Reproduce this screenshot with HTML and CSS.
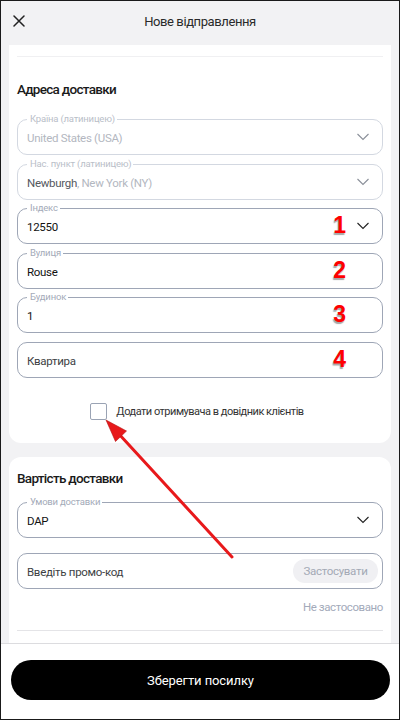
FILE: index.html
```html
<!DOCTYPE html>
<html lang="uk">
<head>
<meta charset="utf-8">
<title>Нове відправлення</title>
<link rel="stylesheet" href="styles.css">
</head>
<body>
<div class="frame">
  <header class="topbar">
    <svg class="close" width="12" height="12" viewBox="0 0 12 12"><path d="M1 1L11 11M11 1L1 11" stroke="#222" stroke-width="1.5" stroke-linecap="round"/></svg>
    <div class="title">Нове відправлення</div>
  </header>
  <main class="content">
    <section class="card card-first">
      <div class="sep sep-top"></div>
      <h2 class="heading">Адреса доставки</h2>
      <div class="fields">
        <div class="field disabled">
          <span class="label">Країна (латиницею)</span>
          <span class="value muted">United States (USA)</span>
          <svg class="chev" width="14" height="8" viewBox="0 0 14 8"><path d="M1.5 1L7 6.5L12.5 1" fill="none" stroke="#8a8f99" stroke-width="1.1"/></svg>
        </div>
        <div class="field disabled">
          <span class="label">Нас. пункт (латиницею)</span>
          <span class="value"><span class="dim">Newburgh</span><span class="muted">, New York (NY)</span></span>
          <svg class="chev" width="14" height="8" viewBox="0 0 14 8"><path d="M1.5 1L7 6.5L12.5 1" fill="none" stroke="#8a8f99" stroke-width="1.1"/></svg>
        </div>
        <div class="field">
          <span class="label">Індекс</span>
          <span class="value">12550</span>
          <span class="num">1</span>
          <svg class="chev" width="14" height="8" viewBox="0 0 14 8"><path d="M1.5 1L7 6.5L12.5 1" fill="none" stroke="#222" stroke-width="1.1"/></svg>
        </div>
        <div class="field">
          <span class="label">Вулиця</span>
          <span class="value">Rouse</span>
          <span class="num">2</span>
        </div>
        <div class="field">
          <span class="label">Будинок</span>
          <span class="value">1</span>
          <span class="num">3</span>
        </div>
        <div class="field">
          <span class="value placeholder">Квартира</span>
          <span class="num">4</span>
        </div>
      </div>
      <label class="check-row">
        <span class="checkbox"></span>
        <span class="check-text">Додати отримувача в довідник клієнтів</span>
      </label>
    </section>
    <section class="card card-second">
      <h2 class="heading heading-2">Вартість доставки</h2>
      <div class="fields fields-2">
        <div class="field">
          <span class="label">Умови доставки</span>
          <span class="value">DAP</span>
          <svg class="chev" width="14" height="8" viewBox="0 0 14 8"><path d="M1.5 1L7 6.5L12.5 1" fill="none" stroke="#222" stroke-width="1.1"/></svg>
        </div>
        <div class="field promo">
          <span class="value placeholder">Введіть промо-код</span>
          <span class="apply">Застосувати</span>
        </div>
      </div>
      <div class="status">Не застосовано</div>
      <div class="sep sep-bottom"></div>
    </section>
  </main>
  <footer class="bottombar">
    <button class="save">Зберегти посилку</button>
  </footer>
  <svg class="arrow" width="400" height="720" viewBox="0 0 400 720">
    <line x1="232" y1="557" x2="118" y2="433" stroke="#e8191b" stroke-width="3" stroke-linecap="round"/>
    <polygon points="106,420 126.5,431 115.5,441.5" fill="#e8191b" stroke="#b31010" stroke-width="0.6" stroke-linejoin="round"/>
  </svg>
</div>
</body>
</html>
```
FILE: styles.css
```css
* { box-sizing: border-box; }
html, body { margin: 0; padding: 0; background: #fff; }
body { font-family: Roboto, "Noto Sans", sans-serif; color: #222; }

.frame {
  position: relative;
  width: 400px;
  height: 720px;
  border: 1px solid #1a1a1a;
  background: #f2f2f4;
  display: flex;
  flex-direction: column;
  overflow: hidden;
}

.topbar {
  height: 44px;
  flex: none;
  display: flex;
  align-items: center;
  justify-content: center;
  position: relative;
}
.close { position: absolute; left: 12px; top: 14px; }
.title { font-size: 13px; letter-spacing: -0.4px; color: #2a2a2a; margin-top: -3px; }

.content {
  flex: 1;
  overflow: hidden;
  padding: 0 8px;
  display: flex;
  flex-direction: column;
  gap: 14px;
}

.card {
  background: #fff;
  border-radius: 12px;
  padding: 0 8px;
  flex: none;
}
.card-first {
  border-top-left-radius: 0;
  border-top-right-radius: 0;
  padding-top: 11px;
  padding-bottom: 23px;
}
.card-second { padding-top: 11px; flex: 1; border-bottom-left-radius: 0; border-bottom-right-radius: 0; }

.sep { height: 1px; background: #f0f0f2; }
.sep-bottom { background: #e4e4e7; margin-top: 16px; }

.heading {
  margin: 22px 0 0;
  font-size: 13.5px;
  font-weight: 500;
  letter-spacing: -0.7px;
  line-height: 20px;
  color: #1a1a1a;
}
.heading-2 { margin-top: 0; }

.fields {
  display: flex;
  flex-direction: column;
  gap: 8.5px;
  margin-top: 20px;
}
.fields-2 { margin-top: 14px; gap: 15px; }

.field {
  position: relative;
  height: 36px;
  border: 1px solid #9ea6b6;
  border-radius: 10px;
  padding: 2px 11px 0 9px;
  display: flex;
  align-items: center;
}
.field.disabled { border-color: #d3d8e1; }

.label {
  position: absolute;
  top: -7px;
  left: 9px;
  padding: 0 2px 0 3px;
  background: #fff;
  font-size: 9.5px;
  letter-spacing: -0.2px;
  line-height: 12px;
  color: #a3aab8;
}
.field.disabled .label { color: #b9bec8; }

.value { flex: 1; font-size: 11.5px; letter-spacing: -0.3px; color: #111; }
.value.muted, .muted { color: #b3b7bf; }
.dim { color: #55585e; }
.placeholder { color: #3d3f44; }

.chev { flex: none; margin-right: 1px; margin-top: -2px; }

.num {
  position: absolute;
  right: 36px;
  top: 50%;
  transform: translateY(-52%);
  font-family: "Liberation Sans", Arial, sans-serif;
  font-weight: 700;
  font-size: 23px;
  line-height: 1;
  color: #ff0000;
  text-shadow: -1px 1.5px 1px rgba(0,0,0,0.35);
}

.check-row {
  display: flex;
  align-items: center;
  justify-content: center;
  gap: 9px;
  margin-top: 25px;
  padding-right: 6px;
}
.checkbox {
  width: 17px;
  height: 17px;
  border: 1px solid #9aa3b4;
  border-radius: 2px;
  flex: none;
}
.check-text { font-size: 11px; letter-spacing: -0.5px; color: #333; }

.promo { padding-right: 4px; padding-top: 0; }
.promo .value { padding-top: 2px; }
.apply {
  flex: none;
  height: 24px;
  width: 85px;
  border-radius: 12px;
  background: #f0f0f3;
  color: #a3a9b5;
  font-size: 11.5px;
  letter-spacing: -0.3px;
  display: flex;
  align-items: center;
  justify-content: center;
}

.status {
  text-align: right;
  font-size: 11.5px;
  letter-spacing: -0.4px;
  color: #a3aaba;
  margin-top: 11px;
}

.bottombar {
  flex: none;
  height: 76px;
  background: #fff;
  border-top: 1px solid #dcdcdf;
  padding: 16px 9px 0 10px;
}
.save {
  display: block;
  width: 100%;
  height: 40px;
  border: none;
  border-radius: 20px;
  background: #000;
  color: #fff;
  font-family: Roboto, "Noto Sans", sans-serif;
  font-size: 13px;
  letter-spacing: -0.1px;
  padding: 0;
}

.arrow { position: absolute; left: -1px; top: -1px; pointer-events: none; }
```
